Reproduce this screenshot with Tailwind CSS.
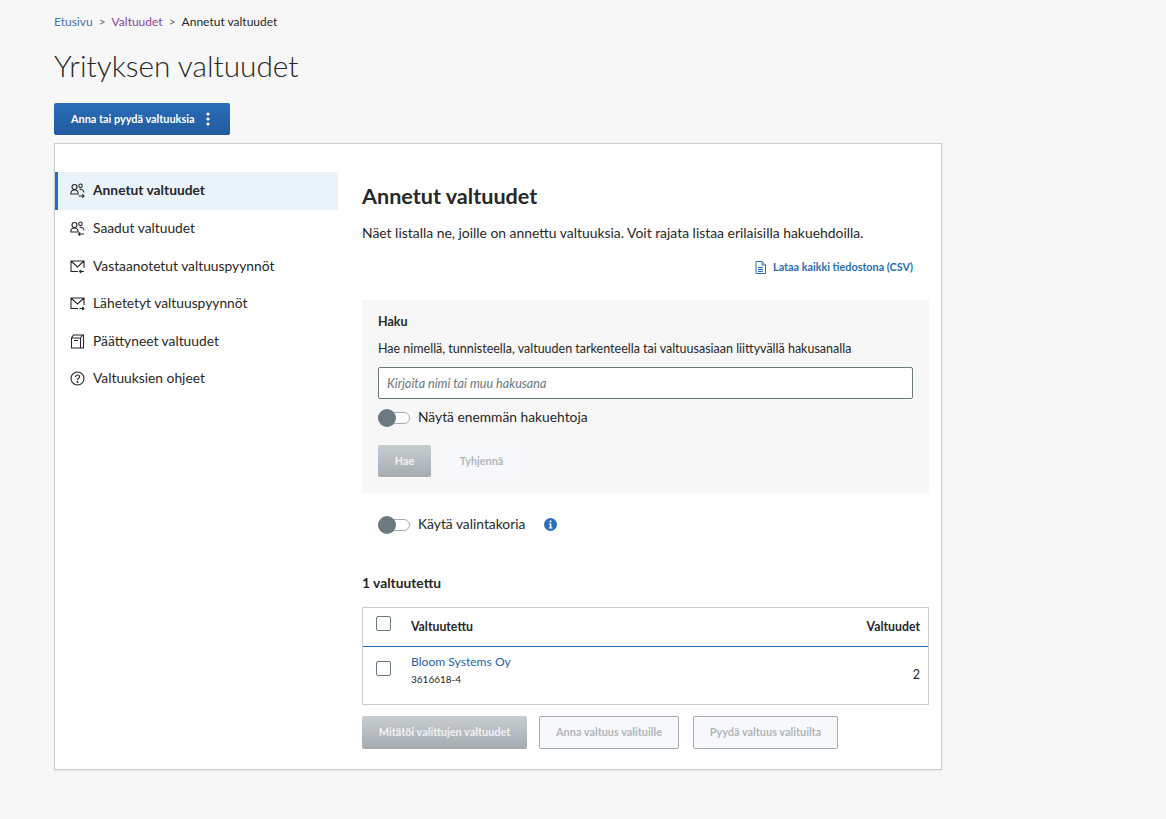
<!DOCTYPE html>
<html lang="fi">
  <head>
    <meta charset="UTF-8" />
    <meta name="viewport" content="width=device-width, initial-scale=1.0" />
    <title>Yrityksen valtuudet</title>
    <script src="https://cdn.jsdelivr.net/npm/@tailwindcss/browser@4"></script>
  </head>
  <body class="bg-[#f7f7f7] h-[819px] overflow-hidden font-['Lato',sans-serif] text-[#282828]">
    <div class="pl-[54px] w-[942px]">
      <nav class="flex items-center h-[14px] mt-[15px] text-[12px] leading-[14px]">
        <a class="text-[#4a72b8]">Etusivu</a>
        <span class="mx-[6px] text-[#6b7478]">&gt;</span>
        <a class="text-[#8a3f9e]">Valtuudet</a>
        <span class="mx-[6px] text-[#6b7478]">&gt;</span>
        <span>Annetut valtuudet</span>
      </nav>
      <h1 class="mt-[16px] h-[42px] text-[29.8px] leading-[42px] font-light text-[#282828]">Yrityksen valtuudet</h1>
      <button class="mt-[16px] flex items-center w-[176px] h-[32px] pl-[17px] rounded-[2px] bg-gradient-to-b from-[#2a6ebb] to-[#215a9c] text-white text-[10.9px] font-bold">
        Anna tai pyydä valtuuksia
        <svg class="ml-[11px]" width="4" height="14" viewBox="0 0 4 14" fill="#fff"><circle cx="2" cy="2" r="1.6"/><circle cx="2" cy="7" r="1.6"/><circle cx="2" cy="12" r="1.6"/></svg>
      </button>
      <div class="mt-[8px] flex h-[627px] bg-white border border-[#c8cdd0] shadow-[0_1px_2px_rgba(0,0,0,0.08)]">
        <aside class="w-[283px] pt-[28px] shrink-0 text-[#282828] text-[13.8px]">
          <ul>
            <li class="flex items-center h-[38px] pl-[12px] pb-[1px] bg-[#eaf2fa] border-l-[3px] border-[#2a6ebb] font-bold">
              <svg class="mr-[8px]" width="15" height="15" viewBox="0 0 15 15" fill="none" stroke="#282828" stroke-width="1.100"><circle cx="4.500" cy="4" r="2.500"/><circle cx="10.500" cy="2.800" r="1.800"/><path d="M.8 11c0-2.800 1.700-4 3.700-4s3.700 1.200 3.700 4zM9.500 6.300c2.500-.3 4.300.8 4.500 3.200M8.500 13H14M12.300 11.300L14 13l-1.700 1.700"/></svg>
              Annetut valtuudet
            </li>
            <li class="flex items-center h-[37.700px] pl-[15px] pb-[1px]">
              <svg class="mr-[8px]" width="15" height="15" viewBox="0 0 15 15" fill="none" stroke="#282828" stroke-width="1.100"><circle cx="4.500" cy="4" r="2.500"/><circle cx="10.500" cy="2.800" r="1.800"/><path d="M.8 11c0-2.800 1.700-4 3.700-4s3.700 1.200 3.700 4zM9.500 6.300c2.500-.3 4.300.8 4.500 3.200M8.500 13H14M10.200 11.300L8.500 13l1.700 1.700"/></svg>
              Saadut valtuudet
            </li>
            <li class="flex items-center h-[37.700px] pl-[15px] pb-[1px]">
              <svg class="mr-[8px]" width="15" height="15" viewBox="0 0 15 15" fill="none" stroke="#282828" stroke-width="1.100"><path d="M8 12.500H1V2h13v7M1 2l6.500 6L14 2M9.500 12.500H14M11.200 10.800l-1.700 1.700 1.700 1.700"/></svg>
              Vastaanotetut valtuuspyynnöt
            </li>
            <li class="flex items-center h-[37.700px] pl-[15px] pb-[1px]">
              <svg class="mr-[8px]" width="15" height="15" viewBox="0 0 15 15" fill="none" stroke="#282828" stroke-width="1.100"><path d="M8 12.500H1V2h13v7M1 2l6.500 6L14 2M9.500 12.500H14M12.300 10.800l1.700 1.700-1.700 1.700"/></svg>
              Lähetetyt valtuuspyynnöt
            </li>
            <li class="flex items-center h-[37.700px] pl-[15px] pb-[1px]">
              <svg class="mr-[8px]" width="15" height="15" viewBox="0 0 15 15" fill="none" stroke="#282828" stroke-width="1.100"><path d="M1.500 4l2-3h10v13h-12zM1.500 4h9v10M10.500 4l2-3M4 6.500h4"/></svg>
              Päättyneet valtuudet
            </li>
            <li class="flex items-center h-[37.700px] pl-[15px] pb-[2px]">
              <svg class="mr-[8px]" width="15" height="15" viewBox="0 0 15 15" fill="none" stroke="#282828" stroke-width="1.100"><circle cx="7.500" cy="7.500" r="6.500"/><path d="M5.500 6c0-1.200 1-2 2-2s2 .8 2 1.900c0 1.600-2 1.600-2 3.100"/><circle cx="7.500" cy="11" r=".5"/></svg>
              Valtuuksien ohjeet
            </li>
          </ul>
        </aside>
        <main class="ml-[24px] w-[567px]">
          <h2 class="mt-[38px] h-[29px] text-[21.600px] leading-[29px] font-bold">Annetut valtuudet</h2>
          <p class="mt-[12px] h-[20px] text-[13.900px] leading-[20px]">Näet listalla ne, joille on annettu valtuuksia. Voit rajata listaa erilaisilla hakuehdoilla.</p>
          <div class="mt-[16px] h-[16px] pr-[16px] flex items-center justify-end text-[10.800px] font-bold text-[#2a6ebb]">
            <svg class="mr-[7px]" width="11" height="13" viewBox="0 0 11 13" fill="none" stroke="#2a6ebb" stroke-width="1"><path d="M1 .5h6l3.500 3.500v8.500H1zM7 .5V4h3.500M3 6.500h5M3 8.500h5M3 10.500h5"/></svg>
            Lataa kaikki tiedostona (CSV)
          </div>
          <section class="mt-[25px] h-[193px] bg-[#f7f7f7] px-[16px] pt-[15px]">
            <div class="h-[14px] text-[12.500px] leading-[14px] font-bold">Haku</div>
            <p class="mt-[13px] h-[14px] text-[12.500px] leading-[14px]">Hae nimellä, tunnisteella, valtuuden tarkenteella tai valtuusasiaan liittyvällä hakusanalla</p>
            <input class="mt-[11px] block w-[535px] h-[32px] px-[8px] bg-white border border-[#6b7a80] rounded-[2px] text-[12.600px] italic placeholder:text-[#6b7a80]" placeholder="Kirjoita nimi tai muu hakusana" />
            <div class="mt-[10px] flex items-center h-[18px]">
              <span class="relative block w-[32px] h-[12px] bg-white border border-[#a5acb0] rounded-full">
                <span class="absolute left-[-1px] top-[-4px] w-[18px] h-[18px] rounded-full bg-[#6b7a80]"></span>
              </span>
              <span class="ml-[8px] pb-[2px] text-[13.800px]">Näytä enemmän hakuehtoja</span>
            </div>
            <div class="mt-[18px] flex gap-[12px]">
              <button class="w-[53px] h-[32px] rounded-[2px] bg-gradient-to-b from-[#c8cdd0] to-[#a5acb0] text-white/80 text-[10.800px] font-bold">Hae</button>
              <button class="w-[77px] h-[32px] rounded-[2px] bg-[#f7f8fb] text-[#b0b6ba] text-[10.800px] font-bold">Tyhjennä</button>
            </div>
          </section>
          <div class="mt-[23px] ml-[16px] flex items-center h-[18px]">
            <span class="relative block w-[32px] h-[12px] bg-white border border-[#a5acb0] rounded-full">
              <span class="absolute left-[-1px] top-[-4px] w-[18px] h-[18px] rounded-full bg-[#6b7a80]"></span>
            </span>
            <span class="ml-[8px] pb-[2px] text-[13.800px]">Käytä valintakoria</span>
            <svg class="ml-[19px] mb-[1px]" width="13" height="13" viewBox="0 0 13 13"><circle cx="6.500" cy="6.500" r="6.500" fill="#2a6ebb"/><rect x="5.600" y="2.500" width="1.800" height="1.800" fill="#fff"/><path d="M4.800 5.500h2.600v4h1v1H4.800v-1h1v-3h-1z" fill="#fff"/></svg>
          </div>
          <div class="mt-[41px] h-[16px] text-[13.800px] leading-[16px] font-bold">1 valtuutettu</div>
          <div class="mt-[16px] h-[98px] border border-[#c8cdd0]">
            <div class="flex items-center h-[39px] border-b border-[#2a6ebb] pl-[13px] pr-[8px] text-[12.300px] font-bold">
              <span class="block w-[15px] h-[15px] mb-[8px] border border-[#6b7a80] rounded-[2px] bg-white"></span>
              <span class="ml-[20px]">Valtuutettu</span>
              <span class="ml-auto">Valtuudet</span>
            </div>
            <div class="flex items-center pl-[13px] pr-[8px] h-[57px]">
              <span class="block w-[15px] h-[15px] mb-[14px] border border-[#6b7a80] rounded-[2px] bg-white"></span>
              <div class="ml-[20px] mb-[11px]">
                <div class="text-[12.100px] leading-[16px] text-[#2a5fa5]">Bloom Systems Oy</div>
                <div class="mt-[2px] text-[10px] leading-[14px]">3616618-4</div>
              </div>
              <span class="ml-auto text-[12.500px]">2</span>
            </div>
          </div>
          <div class="mt-[11px] flex">
            <button class="w-[165px] h-[33px] rounded-[2px] bg-gradient-to-b from-[#c8cdd0] to-[#a5acb0] text-white/80 text-[10.900px] font-bold">Mitätöi valittujen valtuudet</button>
            <button class="ml-[12px] w-[140px] h-[33px] rounded-[2px] border border-[#a5acb0] bg-[#f7f8fb] text-[#b0b6ba] text-[10.900px] font-bold">Anna valtuus valituille</button>
            <button class="ml-[14px] w-[145px] h-[33px] rounded-[2px] border border-[#a5acb0] bg-[#f7f8fb] text-[#b0b6ba] text-[10.900px] font-bold">Pyydä valtuus valituilta</button>
          </div>
        </main>
      </div>
    </div>
  </body>
</html>
